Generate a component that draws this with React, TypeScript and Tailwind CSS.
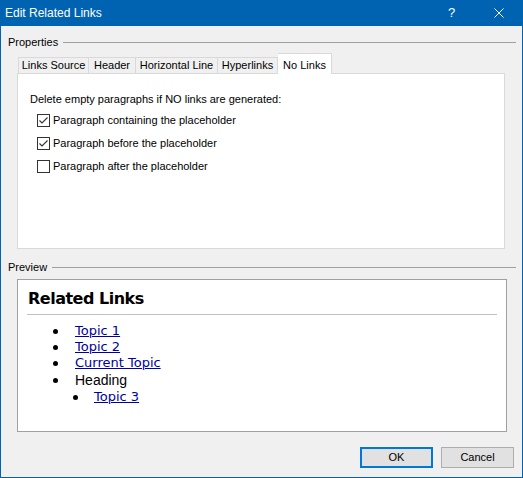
import React from "react";

const ui = "font-['Liberation_Sans',Arial,sans-serif]";
const verdana = "font-['DejaVu_Sans',Verdana,sans-serif]";

const tabs = [
  { label: "Links Source", w: "w-[71px]" },
  { label: "Header", w: "w-[47px]" },
  { label: "Horizontal Line", w: "w-[82px]" },
  { label: "Hyperlinks", w: "w-[60px]" },
];

function CheckBox({ checked }: { checked: boolean }) {
  return (
    <span className="w-[13px] h-[13px] border border-[#333333] bg-white shrink-0 flex items-center justify-center">
      {checked && (
        <svg width="11" height="11" viewBox="0 0 11 11">
          <polyline points="1.5,5.5 4,8 9.5,2.5" fill="none" stroke="#333333" strokeWidth="1.1" />
        </svg>
      )}
    </span>
  );
}

function Bullet() {
  return <span className="w-[5px] h-[5px] rounded-full bg-black shrink-0" />;
}

export default function App() {
  const options = [
    { label: "Paragraph containing the placeholder", checked: true },
    { label: "Paragraph before the placeholder", checked: true },
    { label: "Paragraph after the placeholder", checked: false },
  ];
  const links = ["Topic 1", "Topic 2", "Current Topic"];

  return (
    <div className={`w-[523px] h-[478px] bg-[#0063b1] flex flex-col text-black ${ui}`}>
      {/* Title bar */}
      <div className="h-[26px] flex items-center text-white text-[12px] shrink-0">
        <span className="pl-[5px] flex-1">Edit Related Links</span>
        <span className="w-[10px] mr-[36px] text-[13px]">?</span>
        <svg className="mr-[19px]" width="10" height="10" viewBox="0 0 10 10">
          <path d="M0.5 0.5 L9.5 9.5 M9.5 0.5 L0.5 9.5" stroke="white" strokeWidth="1" />
        </svg>
      </div>

      <div className="flex-1 mx-px mb-px bg-[#f0f0f0] flex flex-col text-[11px]">
        {/* Properties group */}
        <div className="mt-[9px] h-[14px] flex items-center pl-[7px] pr-[6px]">
          <span>Properties</span>
          <span className="flex-1 h-px bg-[#a0a0a0] ml-[5px]" />
        </div>

        <div className="mt-[4px] h-[20px] pl-[17px] flex items-end">
          {tabs.map((t, i) => (
            <div
              key={t.label}
              className={`${t.w} h-[16px] flex items-center justify-center border-t border-r border-[#d9d9d9] ${i === 0 ? "border-l" : ""}`}
            >
              {t.label}
            </div>
          ))}
          <div className="w-[54px] h-[21px] -mb-px relative z-10 bg-white border-t border-r border-[#d9d9d9] flex items-start justify-center pt-[3px]">
            No Links
          </div>
        </div>

        <div className="ml-[16px] w-[488px] h-[176px] bg-white border border-[#d9d9d9] flex flex-col">
          <div className="pt-[18px] pl-[12px] leading-[14px]">
            Delete empty paragraphs if NO links are generated:
          </div>
          <div className="mt-[3px] flex flex-col">
            {options.map((o) => (
              <div key={o.label} className="h-[23px] flex items-center pl-[19px] gap-[3px]">
                <CheckBox checked={o.checked} />
                <span>{o.label}</span>
              </div>
            ))}
          </div>
        </div>

        {/* Preview group */}
        <div className="mt-[11px] h-[14px] flex items-center pl-[7px] pr-[6px]">
          <span>Preview</span>
          <span className="flex-1 h-px bg-[#a0a0a0] ml-[5px]" />
        </div>

        <div className="mt-[5px] ml-[16px] w-[490px] h-[153px] bg-white border border-[#a0a0a0] flex flex-col">
          <div className={`pt-[9px] pl-[10px] text-[16px] leading-[20px] font-bold tracking-[-0.5px] ${verdana}`}>
            Related Links
          </div>
          <div className="mt-[5px] mx-[9px] h-px bg-[#c0c0c0]" />
          <ul className={`mt-[8px] flex flex-col text-[13px] ${verdana}`}>
            {links.map((l) => (
              <li key={l} className="h-[16px] flex items-center pl-[35px]">
                <Bullet />
                <span className="ml-[17px] text-[#0000a0] underline underline-offset-[1px]">{l}</span>
              </li>
            ))}
            <li className={`h-[18px] flex items-center pl-[35px] text-[14px] ${ui}`}>
              <Bullet />
              <span className="ml-[17px]">Heading</span>
            </li>
            <li className="h-[16px] flex items-center pl-[55px]">
              <Bullet />
              <span className="ml-[16px] text-[#0000a0] underline underline-offset-[1px]">Topic 3</span>
            </li>
          </ul>
        </div>

        {/* Buttons */}
        <div className="mt-[15px] flex justify-end gap-[8px] pr-[8px]">
          <button className="w-[73px] h-[21px] bg-[#e1e1e1] border-2 border-[#0078d7] flex items-center justify-center">
            OK
          </button>
          <button className="w-[73px] h-[21px] bg-[#e1e1e1] border border-[#adadad] flex items-center justify-center">
            Cancel
          </button>
        </div>
      </div>
    </div>
  );
}
